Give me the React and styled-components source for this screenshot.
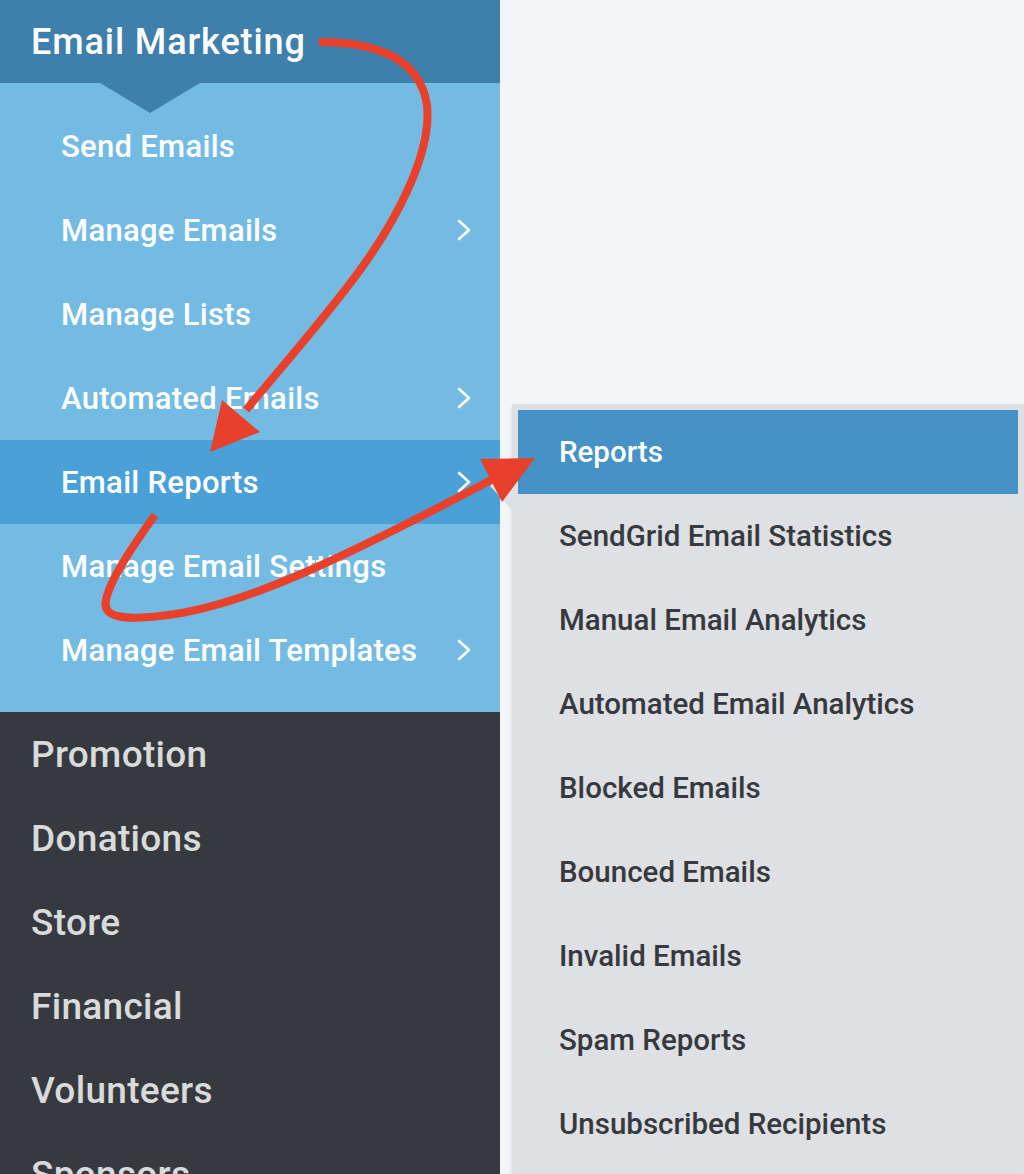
import React from "react";
import styled, { createGlobalStyle } from "styled-components";

const Global = createGlobalStyle`
  html, body { margin: 0; padding: 0; }
  body {
    background: #f4f5f7;
    font-family: Roboto, "Noto Sans", "Liberation Sans", sans-serif;
    overflow: hidden;
  }
`;

const Page = styled.div`
  position: relative;
  display: flex;
  width: 1024px;
  height: 1174px;
  overflow: hidden;
  background: #f4f5f7;
`;

const Sidebar = styled.nav`
  width: 500px;
  flex: none;
  display: flex;
  flex-direction: column;
  background: #363a3f;
`;

const SectionHeader = styled.div`
  position: relative;
  flex: none;
  height: 83px;
  display: flex;
  align-items: center;
  padding-left: 31px;
  background: #3e80ab;
  color: #ffffff;
  font-size: 36px;
  font-weight: 500;
  letter-spacing: 0.9px;
  z-index: 1;
  &::after {
    content: "";
    position: absolute;
    left: 100px;
    top: 83px;
    border-left: 50px solid transparent;
    border-right: 50px solid transparent;
    border-top: 30px solid #3e80ab;
  }
`;

const SubMenu = styled.ul`
  flex: none;
  list-style: none;
  margin: 0;
  padding: 21px 0 20px;
  background: #74bbe3;
`;

const SubItem = styled.li`
  height: 84px;
  display: flex;
  align-items: center;
  justify-content: space-between;
  padding: 0 28px 0 61px;
  color: #ffffff;
  font-size: 31px;
  font-weight: 500;
  letter-spacing: 0.3px;
  background: ${(p) => (p.$active ? "#4aa1d7" : "transparent")};
`;

const MainItem = styled.div`
  height: 84px;
  flex: none;
  display: flex;
  align-items: center;
  padding-left: 31px;
  color: #d9dadb;
  font-size: 37px;
  font-weight: 500;
  letter-spacing: 0.3px;
`;

const Main = styled.main`
  flex: 1;
  padding: 404px 0 0 12px;
`;

const Flyout = styled.ul`
  position: relative;
  list-style: none;
  margin: 0;
  width: 512px;
  box-sizing: border-box;
  padding: 6px;
  background: #dfe0e4;
  box-shadow: 0 3px 4px rgba(0, 0, 0, 0.12);
  &::before {
    content: "";
    position: absolute;
    left: -22px;
    top: 58px;
    border-top: 24px solid transparent;
    border-bottom: 24px solid transparent;
    border-right: 22px solid #dfe0e4;
  }
`;

const FlyItem = styled.li`
  height: 84px;
  display: flex;
  align-items: center;
  padding-left: 41px;
  font-size: 29.5px;
  font-weight: 500;
  color: ${(p) => (p.$active ? "#ffffff" : "#363a3e")};
  background: ${(p) => (p.$active ? "#4692c4" : "transparent")};
`;

const Overlay = styled.svg`
  position: absolute;
  left: 0;
  top: 0;
  z-index: 5;
  pointer-events: none;
`;

const Chevron = () => (
  <svg width="16" height="24" viewBox="0 0 16 24">
    <polyline points="3,3 13,12 3,21" fill="none" stroke="#fff" strokeWidth="2.6" strokeLinecap="round" strokeLinejoin="round" />
  </svg>
);

const subItems = [
  { label: "Send Emails" },
  { label: "Manage Emails", more: true },
  { label: "Manage Lists" },
  { label: "Automated Emails", more: true },
  { label: "Email Reports", more: true, active: true },
  { label: "Manage Email Settings" },
  { label: "Manage Email Templates", more: true },
];

const mainItems = ["Promotion", "Donations", "Store", "Financial", "Volunteers", "Sponsors"];

const flyItems = [
  "Reports",
  "SendGrid Email Statistics",
  "Manual Email Analytics",
  "Automated Email Analytics",
  "Blocked Emails",
  "Bounced Emails",
  "Invalid Emails",
  "Spam Reports",
  "Unsubscribed Recipients",
];

export default function App() {
  return (
    <Page>
      <Global />
      <Sidebar>
        <SectionHeader>Email Marketing</SectionHeader>
        <SubMenu>
          {subItems.map((s) => (
            <SubItem key={s.label} $active={s.active}>
              <span>{s.label}</span>
              {s.more && <Chevron />}
            </SubItem>
          ))}
        </SubMenu>
        {mainItems.map((m) => (
          <MainItem key={m}>{m}</MainItem>
        ))}
      </Sidebar>
      <Main>
        <Flyout>
          {flyItems.map((f, i) => (
            <FlyItem key={f} $active={i === 0}>
              {f}
            </FlyItem>
          ))}
        </Flyout>
      </Main>
      <Overlay width="1024" height="1174" viewBox="0 0 1024 1174">
        <path
          d="M319 42 C 380 42, 420 60, 427 105 C 432 150, 400 220, 345 290 C 310 335, 275 375, 246 410"
          fill="none"
          stroke="#e8402a"
          strokeWidth="8"
        />
        <polygon points="210,452 222,400 260,432" fill="#e8402a" />
        <path
          d="M155 515 C 130 550, 110 580, 106 600 C 102 618, 125 620, 160 616 C 240 608, 340 560, 495 478"
          fill="none"
          stroke="#e8402a"
          strokeWidth="8"
        />
        <polygon points="535,458 480,459 502,502" fill="#e8402a" />
      </Overlay>
    </Page>
  );
}
